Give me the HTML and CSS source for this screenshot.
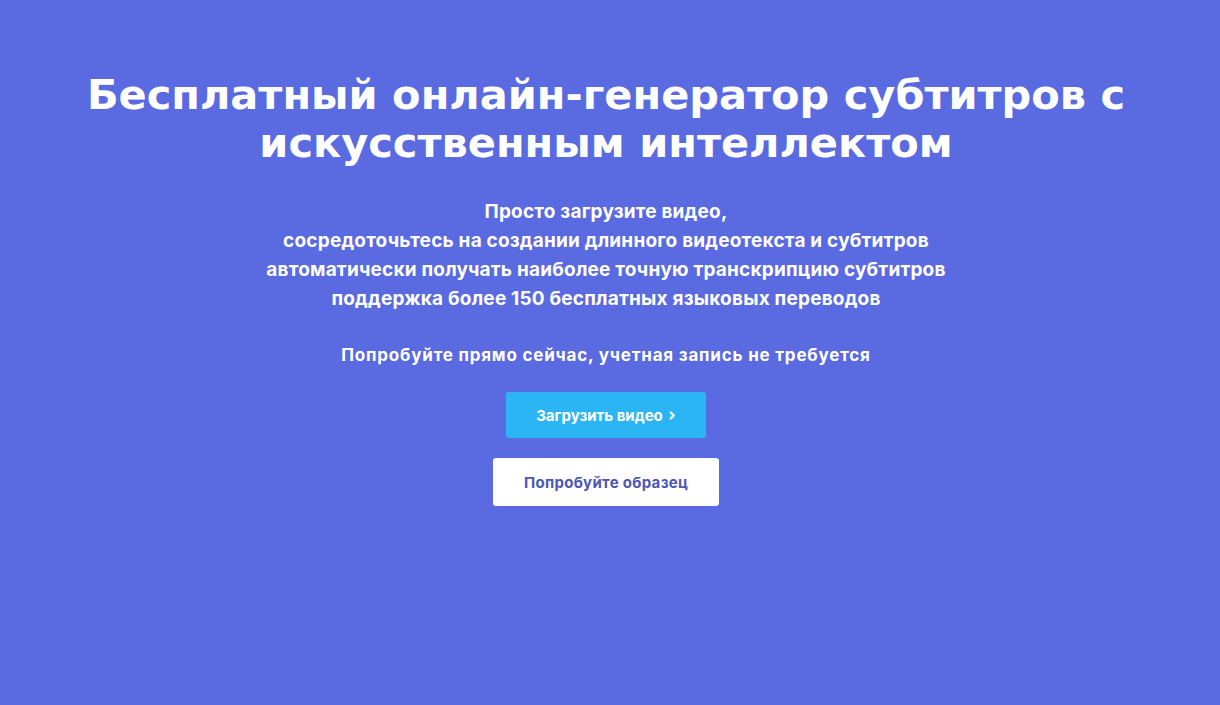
FILE: index.html
```html
<!DOCTYPE html>
<html lang="ru">
<head>
<meta charset="utf-8">
<title>Генератор субтитров</title>
<link rel="stylesheet" href="styles.css">
</head>
<body>
<main class="hero">
  <h1 class="title">Бесплатный онлайн-генератор субтитров с<br>искусственным интеллектом</h1>
  <p class="lead">Просто загрузите видео,<br>сосредоточьтесь на создании длинного видеотекста и субтитров<br>автоматически получать наиболее точную транскрипцию субтитров<br>поддержка более 150 бесплатных языковых переводов</p>
  <p class="note">Попробуйте прямо сейчас, учетная запись не требуется</p>
  <div class="actions">
    <a class="btn btn-primary" href="#">Загрузить видео <svg class="chev" viewBox="0 0 8 10" width="7" height="9"><path d="M2 1.5 L5.5 5 L2 8.5" fill="none" stroke="#fff" stroke-width="2.4" stroke-linecap="round" stroke-linejoin="round"/></svg></a>
    <a class="btn btn-secondary" href="#">Попробуйте образец</a>
  </div>
</main>
</body>
</html>
```

FILE: styles.css
```css
html, body {
  margin: 0;
  padding: 0;
  background: #5a6ae0;
  height: 100%;
}
.hero {
  display: flex;
  flex-direction: column;
  align-items: center;
  text-align: center;
  color: #fff;
  padding: 71px 8px 0 0;
}
.title {
  margin: 0;
  font-family: "DejaVu Sans", sans-serif;
  font-weight: 700;
  font-size: 41.5px;
  line-height: 48px;
}
.lead {
  margin: 30px 0 0;
  font-family: Inter, sans-serif;
  font-weight: 700;
  font-size: 19px;
  line-height: 29px;
  letter-spacing: 0.2px;
}
.note {
  margin: 30px 0 0;
  font-family: Inter, sans-serif;
  font-weight: 700;
  font-size: 17px;
  line-height: 24px;
  letter-spacing: 0.8px;
}
.actions {
  display: flex;
  flex-direction: column;
  align-items: center;
  gap: 20px;
  margin-top: 25px;
}
.btn {
  display: flex;
  align-items: center;
  justify-content: center;
  gap: 6px;
  text-decoration: none;
  font-family: Inter, sans-serif;
  font-weight: 700;
  font-size: 15px;
  border-radius: 3px;
}
.btn-primary {
  width: 200px;
  height: 46px;
  background: #2bb5f5;
  color: #fff;
}
.btn-secondary {
  width: 226px;
  height: 48px;
  background: #fff;
  color: #4c57b4;
  letter-spacing: 0.3px;
}
.chev { display: block; }
```
